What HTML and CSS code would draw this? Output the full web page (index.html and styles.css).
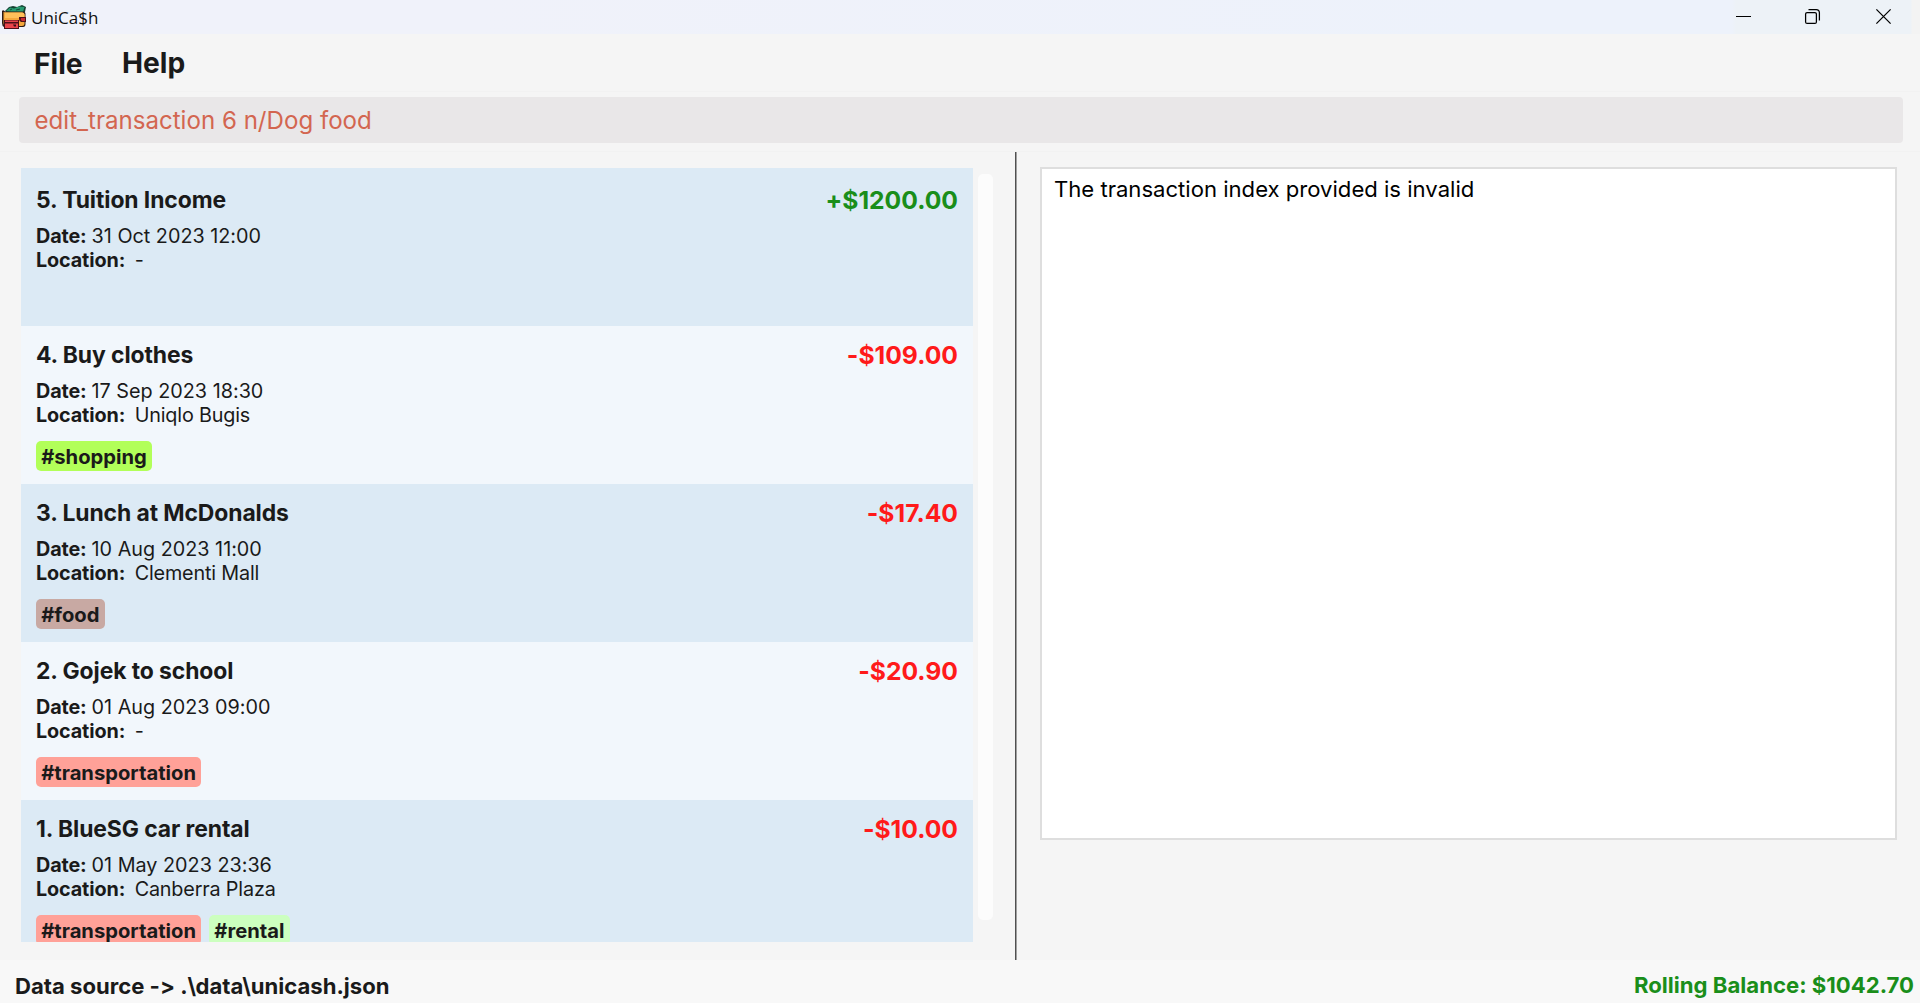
FILE: index.html
```html
<!DOCTYPE html>
<html lang="en">
<head>
<meta charset="utf-8">
<title>UniCa$h</title>
<link rel="stylesheet" href="styles.css">
</head>
<body>
<header class="titlebar">
  <svg class="logo" width="25" height="25" viewBox="0 0 25 25">
    <path d="M3 6 7 2 11 1 15 2 20 0 24 2 23 7 18 9 5 8Z" fill="#153f31"/>
    <path d="M4 6 8 2.5 12 3.5 17 1.5 22.5 2 21 7 14 8Z" fill="#279b70"/>
    <path d="M8 5 10 4M14 5 18 4" stroke="#164c39" stroke-width="1"/>
    <path d="M0 6Q1 4.500 3 6.500H21Q23.500 6.500 23.500 9V19Q23.500 22 21 22H17V24H2V22Q0 21 0 18Z" fill="#2c1b16"/>
    <path d="M1.500 7 4 7.500H20Q22.500 7.500 22.500 10V19Q22.500 21 20 21H3Q1.500 20 1.500 18Z" fill="#f5a73b"/>
    <path d="M3 7.500H20Q22.500 7.500 22.500 10V13H3Z" fill="#ffc05a"/>
    <path d="M2 15H17V24H2Z" fill="#4c1119"/>
    <path d="M3 15.500H16V17H3ZM3 18.500H16V23H3Z" fill="#ea454b"/>
    <path d="M11 19.500H14V21.500H12Z" fill="#3a1018"/>
    <path d="M17 12H24V17H19Q17 16 17 14Z" fill="#4c1119"/>
    <path d="M19 13H23V16H20Q18 15 19 13Z" fill="#c82735"/>
  </svg>
  <span class="app-name">UniCa$h</span>
  <svg class="controls" width="156" height="34" viewBox="0 0 156 34" fill="none" stroke="#000">
    <path d="M0 16.5H15" stroke-width="1"/>
    <rect x="69.6" y="12.6" width="10.8" height="10.8" rx="1.5" stroke-width="1.25"/>
    <path d="M72.5 9.6H80.2Q83.4 9.6 83.4 12.8V20.5" stroke-width="1.25"/>
    <path d="M140.4 9.4 154.6 23.6M154.6 9.4 140.4 23.6" stroke-width="1.25"/>
  </svg>
</header>
<nav class="menu"><span class="menu-file">File</span><span class="menu-help">Help</span></nav>
<section class="command"><div class="command-field">edit_transaction 6 n/Dog food</div></section>
<main class="split">
  <section class="list-pane">
    <div class="list">
      <article class="row no-tags">
        <div class="head"><h2>5. Tuition Income</h2><span class="amount income">+$1200.00</span></div>
        <p><b>Date:</b><span class="date">31 Oct 2023 12:00</span></p>
        <p><b>Location:</b><span class="place">-</span></p>
      </article>
      <article class="row">
        <div class="head"><h2>4. Buy clothes</h2><span class="amount">-$109.00</span></div>
        <p><b>Date:</b><span class="date">17 Sep 2023 18:30</span></p>
        <p><b>Location:</b><span class="place">Uniqlo Bugis</span></p>
        <div class="tags"><span class="tag shopping">#shopping</span></div>
      </article>
      <article class="row">
        <div class="head"><h2>3. Lunch at McDonalds</h2><span class="amount">-$17.40</span></div>
        <p><b>Date:</b><span class="date">10 Aug 2023 11:00</span></p>
        <p><b>Location:</b><span class="place">Clementi Mall</span></p>
        <div class="tags"><span class="tag food">#food</span></div>
      </article>
      <article class="row">
        <div class="head"><h2>2. Gojek to school</h2><span class="amount">-$20.90</span></div>
        <p><b>Date:</b><span class="date">01 Aug 2023 09:00</span></p>
        <p><b>Location:</b><span class="place">-</span></p>
        <div class="tags"><span class="tag transportation">#transportation</span></div>
      </article>
      <article class="row">
        <div class="head"><h2>1. BlueSG car rental</h2><span class="amount">-$10.00</span></div>
        <p><b>Date:</b><span class="date">01 May 2023 23:36</span></p>
        <p><b>Location:</b><span class="place">Canberra Plaza</span></p>
        <div class="tags"><span class="tag transportation">#transportation</span><span class="tag rental">#rental</span></div>
      </article>
    </div>
    <div class="scrollbar"></div>
  </section>
  <div class="divider"></div>
  <section class="result-pane"><div class="result">The transaction index provided is invalid</div></section>
</main>
<footer class="status"><span class="source">Data source -&gt; .\data\unicash.json</span><span class="balance">Rolling Balance: $1042.70</span></footer>
</body>
</html>
```
FILE: styles.css
```css
* { box-sizing: border-box; }
body {
  margin: 0; width: 1920px; height: 1003px; overflow: hidden;
  display: flex; flex-direction: column;
  font-family: Inter, sans-serif; color: #1a1a1a; background: #f5f5f5;
  font-feature-settings: "calt" 0;
}
h2, p { margin: 0; }
.titlebar {
  height: 34px; display: flex; align-items: center; flex: none;
  padding: 0 28px 0 2px;
  background: linear-gradient(90deg, #f0f2fa 0, #f0f2fa 480px, #edf2fb 1500px, #edf2fb 1732px, #edf2f7 1736px, #edf2f7 1911px, #f3f3f3 1912px);
}
.logo { margin-top: 1px; }
.app-name { margin-left: 4px; font: 17px/24px "Open Sans", sans-serif; color: #111; margin-top: 1px; }
.controls { margin-left: auto; }
.menu { height: 58px; flex: none; display: flex; padding: 11px 0 0 34px; font-size: 28.2px; font-weight: 700; line-height: 36px; border-bottom: 1px solid #f2f2f2; }
.menu-file { width: 88px; padding-top: 1px; }
.command { height: 60px; flex: none; padding: 5px 17px 0 19px; border-bottom: 1px solid #f2f2f2; }
.command-field {
  height: 46px; border-radius: 4px; background: #e9e7e8; color: #d36650;
  padding-left: 15.5px; font-size: 24.1px; font-weight: 400; line-height: 48px;
}
.split { height: 808px; flex: none; display: flex; }
.list-pane { width: 1015px; display: flex; padding: 16px 0 0 21px; }
.list { width: 952px; height: 774px; overflow: hidden; }
.row { height: 158px; padding: 15px 15px 0 15px; background: #f2f7fc; }
.row:nth-child(odd) { background: #dceaf5; }
.no-tags { padding-top: 18px; }
.head { display: flex; justify-content: space-between; height: 28px; margin-bottom: 10px; }
h2 { font-size: 22.9px; line-height: 28px; font-weight: 700; letter-spacing: -0.09px; }
.amount { font-size: 24.7px; line-height: 28px; font-weight: 700; color: #ff1a1a; }
.income { color: #1a8e1a; }
.row p { display: flex; height: 24px; font-size: 19.8px; line-height: 24px; font-weight: 400; }
.row b { font-weight: 700; letter-spacing: -0.13px; }
.date { margin-left: 5px; }
.place { margin-left: 9.5px; letter-spacing: -0.17px; }
.tags { display: flex; gap: 8px; margin-top: 14px; }
.tag { height: 30px; padding: 0 5.2px; border-radius: 5px; font-size: 20.2px; line-height: 31px; font-weight: 700; }
.shopping { background: #b2ff59; }
.food { background: #c8a9a3; }
.transportation { background: #ffa198; }
.rental { background: #ccffbf; }
.scrollbar { width: 15px; height: 746px; margin: 6px 0 0 4.5px; border-radius: 5px; background: #fcfcfc; }
.divider { width: 2px; background: linear-gradient(90deg, #505050 50%, #a0a0a0 50%); }
.result-pane { flex: 1; padding: 15px 23px 0 23px; }
.result {
  height: 673px; border: 2px solid #dedede; background: #fff; color: #000;
  padding: 6px 12px 0; font-size: 22.1px; font-weight: 400; line-height: 28px;
}
.status {
  flex: 1; display: flex; justify-content: space-between; padding: 11px 6px 0 15px;
  background: #f8f8f8; font-size: 22.1px; line-height: 28px; font-weight: 700;
}
.source { padding-top: 1px; }
.balance { color: #1a8e1a; font-size: 22.15px; }
```
